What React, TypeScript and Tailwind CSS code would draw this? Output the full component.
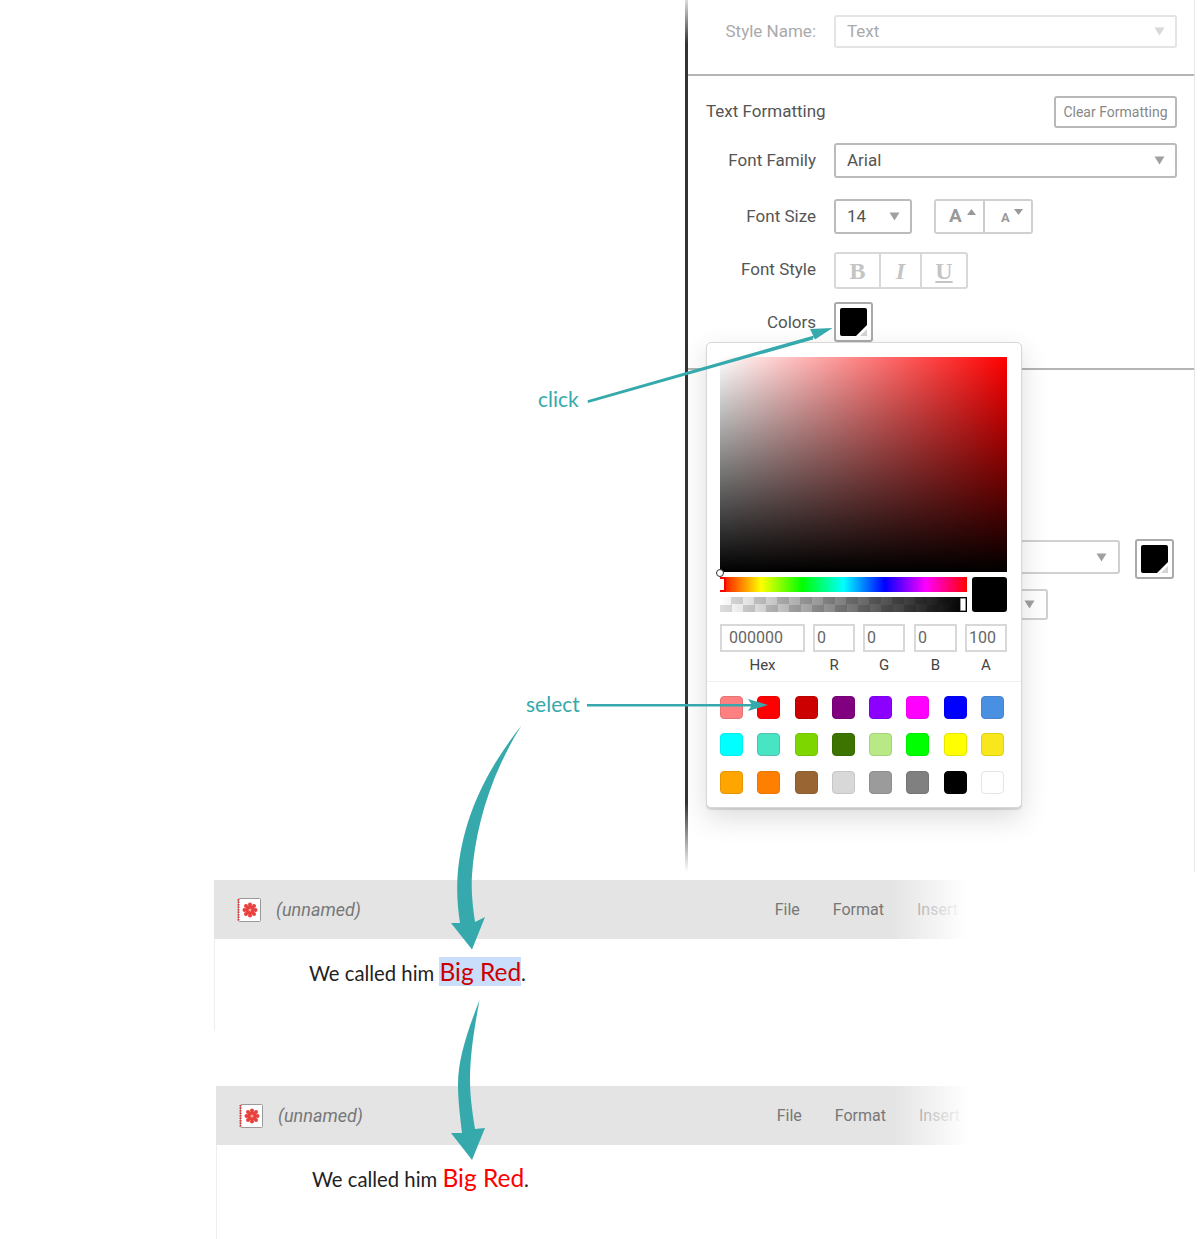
import React from 'react'

const swatches = [
  'bg-[#ff8080] border-[#e57373]', 'bg-[#ff0000] border-[#ee0000]', 'bg-[#cc0000] border-[#bb0000]', 'bg-[#800080] border-[#750075]',
  'bg-[#8b00ff] border-[#8000ee]', 'bg-[#ff00ff] border-[#ee00ee]', 'bg-[#0000ff] border-[#0000ee]', 'bg-[#4a90e2] border-[#4484d0]',
  'bg-[#00ffff] border-[#00eeee]', 'bg-[#48e5c2] border-[#55bdb8]', 'bg-[#7ed600] border-[#74c400]', 'bg-[#3d7300] border-[#386a00]',
  'bg-[#b8e986] border-[#a5d478]', 'bg-[#00ff00] border-[#00ee00]', 'bg-[#ffff00] border-[#e6e600]', 'bg-[#f8e71c] border-[#e0d010]',
  'bg-[#ffa500] border-[#e69500]', 'bg-[#ff8000] border-[#ee7700]', 'bg-[#996633] border-[#8c5d2f]', 'bg-[#d8d8d8] border-[#c6c6c6]',
  'bg-[#9b9b9b] border-[#8e8e8e]', 'bg-[#808080] border-[#757575]', 'bg-[#000000] border-[#000000]', 'bg-[#ffffff] border-[#e4e4e4]',
]

function Caret({ light }: { light?: boolean }) {
  return (
    <svg width="11" height="9" viewBox="0 0 11 9" className={light ? 'text-[#d8d8d8]' : 'text-[#a0a0a0]'}>
      <path d="M0.5 0.5h10L5.5 8.5z" fill="currentColor" />
    </svg>
  )
}

function Row({ label, muted, children, className, labelClassName }: { label: string; muted?: boolean; children: React.ReactNode; className?: string; labelClassName?: string }) {
  return (
    <div className={`flex items-center ${className ?? ''}`}>
      <div className={`w-[131px] text-right text-[17px] leading-5 ${labelClassName ?? 'pb-[2px]'} ${muted ? 'text-[#aaa]' : 'text-[#555]'}`}>{label}</div>
      <div className="ml-[18px] flex items-center">{children}</div>
    </div>
  )
}

function ColorButton() {
  return (
    <div className="w-[39px] h-[40px] rounded-[3px] border-2 border-[#aaa] bg-white p-[4px]">
      <div className="relative w-full h-full bg-black rounded-[2px] overflow-hidden">
        <svg width="27" height="28" viewBox="0 0 27 28" className="absolute left-0 top-0">
          <path d="M27 28V17L16 28z" fill="#fff" />
          <path d="M27 28V21L20 28z" fill="#d4d4d4" />
        </svg>
      </div>
    </div>
  )
}

function ColorPicker() {
  return (
    <div className="absolute left-[21px] top-[342px] w-[316px] h-[466px] bg-white rounded-[5px] border border-[#d8d8d8] shadow-[0_2px_1px_rgba(0,0,0,0.12),0_10px_28px_rgba(0,0,0,0.14)] px-[13px] pt-[14px] text-[#444]">
      <div className="relative w-[287px] h-[215px] bg-[linear-gradient(to_top,#000,transparent),linear-gradient(to_right,#fff,#f00)]">
        <div className="absolute left-[-4px] bottom-[-5px] w-[8px] h-[8px] rounded-full border border-[#333] bg-white" />
      </div>
      <div className="mt-[5px] flex justify-between w-[287px]">
        <div className="w-[247px] flex flex-col gap-[5px]">
          <div className="relative h-[15px] bg-[linear-gradient(to_right,#f00,#ff0,#0f0,#0ff,#00f,#f0f,#f00)]">
            <div className="absolute left-0 top-0 w-[6px] h-[15px] bg-white border-2 border-l-0 border-[#f00] rounded-r-[2px]" />
          </div>
          <div className="relative h-[15px] bg-[repeating-conic-gradient(#ddd_0_25%,#fff_0_50%)] bg-[length:23px_15px]">
            <div className="absolute inset-0 bg-[linear-gradient(to_right,transparent,#000)]" />
            <div className="absolute right-[1px] top-[1px] w-[6px] h-[13px] rounded-[1px] bg-white border border-[#999]" />
          </div>
        </div>
        <div className="w-[35px] h-[35px] rounded-[3px] bg-black" />
      </div>
      <div className="mt-[12px] flex text-[16px] leading-[24px] text-[#666]">
        <div className="w-[85px] h-[28px] border-2 border-[#d8d8d8] pl-[7px] leading-[24px]">000000</div>
        <div className="ml-[8px] w-[42px] h-[28px] border-2 border-[#d8d8d8] pl-[2px]">0</div>
        <div className="ml-[8px] w-[42px] h-[28px] border-2 border-[#d8d8d8] pl-[2px]">0</div>
        <div className="ml-[9px] w-[43px] h-[28px] border-2 border-[#d8d8d8] pl-[2px]">0</div>
        <div className="ml-[8px] w-[42px] h-[28px] border-2 border-[#d8d8d8] pl-[2px]">100</div>
      </div>
      <div className="mt-[3px] flex text-[15px] leading-[20px] text-[#444] text-center">
        <div className="w-[85px]">Hex</div>
        <div className="ml-[8px] w-[42px]">R</div>
        <div className="ml-[8px] w-[42px]">G</div>
        <div className="ml-[9px] w-[43px]">B</div>
        <div className="ml-[8px] w-[42px]">A</div>
      </div>
      <div className="mt-[6px] -mx-[13px] border-t border-[#eee]" />
      <div className="mt-[14px] grid grid-cols-[repeat(8,23px)] gap-x-[14.3px] gap-y-[14.3px]">
        {swatches.map((s, i) => (
          <div key={i} className={`w-[23px] h-[23px] rounded-[4px] border ${s}`} />
        ))}
      </div>
    </div>
  )
}

function Panel() {
  return (
    <div className="absolute left-[685px] top-0 w-[510px] h-[872px] border-r border-[#e6e6e6]">
      <div className="absolute left-0 top-0 w-[3px] h-full bg-[linear-gradient(to_bottom,#ddd,#333_5%,#333_92%,#fff)]" />
      <div className="h-[76px] border-b-2 border-[#b4b4b4] pt-[15px]">
        <Row label="Style Name:" muted>
          <div className="w-[343px] h-[33px] rounded-[3px] border-2 border-[#e4e4e4] flex items-center justify-between pl-[11px] pr-[10px] text-[17px] text-[#aaa]">
            Text
            <Caret light />
          </div>
        </Row>
      </div>
      <div className="mt-[20px] flex items-center justify-between pl-[21px] pr-[17px]">
        <div className="text-[17px] text-[#555]">Text Formatting</div>
        <div className="w-[123px] h-[32px] rounded-[3px] border-2 border-[#b8b8b8] flex items-center justify-center text-[14px] text-[#888]">Clear Formatting</div>
      </div>
      <Row label="Font Family" className="mt-[15px]">
        <div className="w-[343px] h-[35px] rounded-[3px] border-2 border-[#bbb] flex items-center justify-between pl-[11px] pr-[10px] text-[17px] text-[#555]">
          Arial
          <Caret />
        </div>
      </Row>
      <Row label="Font Size" className="mt-[21px]">
        <div className="w-[78px] h-[35px] rounded-[3px] border-2 border-[#bbb] flex items-center justify-between pl-[11px] pr-[10px] text-[17px] text-[#555]">
          14
          <Caret />
        </div>
        <div className="ml-[22px] w-[99px] h-[35px] rounded-[3px] border-2 border-[#d0d0d0] flex text-[#999] font-bold">
          <div className="w-[49px] border-r-2 border-[#ccc] relative">
            <span className="absolute left-[13px] top-[3px] text-[19px] leading-6">A</span>
            <svg width="9" height="6" viewBox="0 0 9 6" className="absolute left-[31px] top-[8px]"><path d="M4.5 0L9 6H0z" fill="#999" /></svg>
          </div>
          <div className="flex-1 relative">
            <span className="absolute left-[16px] top-[7px] text-[13px] leading-5">A</span>
            <svg width="9" height="6" viewBox="0 0 9 6" className="absolute left-[29px] top-[8px]"><path d="M0 0h9L4.5 6z" fill="#999" /></svg>
          </div>
        </div>
      </Row>
      <Row label="Font Style" className="mt-[18px]" labelClassName="pb-[4px]">
        <div className="w-[134px] h-[37px] rounded-[3px] border-2 border-[#d8d8d8] flex font-['Liberation_Serif',serif] text-[24px] font-bold text-[#c4c4c4]">
          <div className="w-[45px] border-r-2 border-[#d8d8d8] flex items-center justify-center">B</div>
          <div className="w-[41px] border-r-2 border-[#d8d8d8] flex items-center justify-center italic">I</div>
          <div className="flex-1 flex items-center justify-center underline">U</div>
        </div>
      </Row>
      <Row label="Colors" className="mt-[13px]" labelClassName="pb-0">
        <ColorButton />
      </Row>
      <div className="mt-[26px] border-t-2 border-[#b4b4b4]" />
      <div className="mt-[169px] ml-[149px] flex items-start">
        <div className="mt-px w-[286px] h-[34px] rounded-[3px] border-2 border-[#d0d0d0] flex items-center justify-end pr-[11px]">
          <Caret />
        </div>
        <div className="ml-[15px]">
          <ColorButton />
        </div>
      </div>
      <div className="mt-[10px] ml-[149px] w-[214px] h-[31px] rounded-[3px] border-2 border-[#d0d0d0] flex items-center justify-end pr-[11px]">
        <Caret />
      </div>
      <ColorPicker />
    </div>
  )
}

function Logo() {
  return (
    <svg width="24" height="24" viewBox="0 0 24 24">
      <rect x="1.5" y="0.5" width="22" height="23" rx="1" fill="#fff" stroke="#999" />
      <path d="M1.5 1v22" stroke="#e33" strokeWidth="2" strokeDasharray="1.5 1" />
      <g fill="#e8403c">
        <circle cx="13" cy="12" r="4.5" />
        <circle cx="13" cy="6.5" r="2" />
        <circle cx="13" cy="17.5" r="2" />
        <circle cx="7.5" cy="12" r="2" />
        <circle cx="18.5" cy="12" r="2" />
        <circle cx="9" cy="8" r="2" />
        <circle cx="17" cy="8" r="2" />
        <circle cx="9" cy="16" r="2" />
        <circle cx="17" cy="16" r="2" />
      </g>
      <circle cx="13" cy="12" r="1.5" fill="#f7a0a0" />
    </svg>
  )
}

function DocWindow({ className, bodyClassName, children }: { className: string; bodyClassName: string; children: React.ReactNode }) {
  return (
    <div className={`absolute w-[752px] ${className}`}>
      <div className="relative h-[59px] bg-[#e4e4e4] flex items-center pl-[23px] text-[#777]">
        <Logo />
        <div className="ml-[15px] text-[18px] italic">(unnamed)</div>
        <div className="ml-auto mr-[9px] flex text-[16px]">
          <span>File</span>
          <span className="ml-[33px]">Format</span>
          <span className="ml-[33px] text-[#888] w-[40px]">Insert</span>
        </div>
        <div className="absolute right-0 top-0 h-full w-[75px] bg-[linear-gradient(to_right,transparent,#fff)]" />
      </div>
      <div className={`${bodyClassName} border-l border-[#eee] font-['Lato',sans-serif] text-[20.3px] leading-8 text-[#222]`}>{children}</div>
    </div>
  )
}

function Arrows() {
  return (
    <svg width="1200" height="1239" viewBox="0 0 1200 1239" className="absolute left-0 top-0 pointer-events-none">
      <g fill="#36a9ac">
        <path d="M587.6 400.2L814 335.5L813 339.5L587.9 403z" />
        <path d="M832.5 328L810 329L815 339.5z" />
        <path d="M587 704h170v2.6H587z" />
        <path d="M768 705L748 699L752 705L748 711z" />
        <path d="M521.5 725.5C490 765 462 815 457.5 877C456.5 895 458 910 460 923L451 923L472 949.5L485 917L475 922C472.5 905 471 890 472 875C475 830 490 775 521.5 725.5z" />
        <path d="M479.5 1000C466 1035 458 1060 458 1085C458 1100 460 1115 462 1133L451 1133L472 1160L485 1128L475 1129C472 1110 470 1095 470 1080C470 1055 474 1030 479.5 1000z" />
      </g>
    </svg>
  )
}

export default function App() {
  return (
    <div className="relative w-[1200px] h-[1239px] bg-white overflow-hidden font-['Roboto',sans-serif]">
      <Panel />
      <DocWindow className="left-[214px] top-[880px]" bodyClassName="h-[92px] pt-[17px] pl-[94px]">
        We called him <span className="bg-[#c9defa] text-[#cc0000] text-[24.5px]">Big Red</span>.
      </DocWindow>
      <DocWindow className="left-[216px] top-[1086px]" bodyClassName="h-[94px] pt-[17px] pl-[95px]">
        We called him <span className="text-[#ff0000] text-[24.5px]">Big Red</span>.
      </DocWindow>
      <div className="absolute left-[538px] top-[385px] font-['Lato',sans-serif] text-[21px] leading-7 text-[#36a9ac]">click</div>
      <div className="absolute left-[526px] top-[690px] font-['Lato',sans-serif] text-[21px] leading-7 text-[#36a9ac]">select</div>
      <Arrows />
    </div>
  )
}
